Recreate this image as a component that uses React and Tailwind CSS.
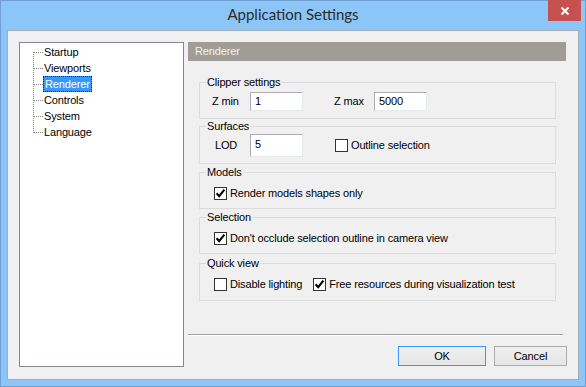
import React from "react";

const treeItems = ["Startup", "Viewports", "Renderer", "Controls", "System", "Language"];

const CheckBox = ({ checked }) => (
  <span className="w-[13px] h-[13px] shrink-0 border border-[#333333] bg-white flex items-center justify-center">
    {checked && (
      <svg width="11" height="11" viewBox="0 0 11 11">
        <path d="M1.6 5.2 L4.2 8.2 L9.4 1.6" stroke="#000" strokeWidth="2.1" fill="none" />
      </svg>
    )}
  </span>
);

const Field = ({ value, tall }) => (
  <div
    className={
      tall
        ? "w-[53px] h-[23px] bg-white border border-[#e3e9ef] border-t-[#abadb3] border-l-[#abadb3] pl-[4px] pt-[2px] leading-[14px]"
        : "w-[53px] h-[19px] bg-white border border-[#e3e9ef] border-t-[#abadb3] border-l-[#abadb3] pl-[4px] pt-[1px] leading-[14px]"
    }
  >
    {value}
  </div>
);

const Group = ({ title, className, children }) => (
  <fieldset className={`m-0 p-0 min-w-0 border border-[#dcdcdc] ${className || ""}`}>
    <legend className="ml-[6px] px-[1px] leading-[14px]">{title}</legend>
    {children}
  </fieldset>
);

const TreeLines = () => (
  <svg width="11" height="96" viewBox="0 0 11 96" className="shrink-0" shapeRendering="crispEdges">
    <line x1="1.5" y1="8" x2="1.5" y2="89" stroke="#808080" strokeDasharray="1 1" />
    {[0, 1, 2, 3, 4, 5].map((i) => (
      <line key={i} x1="2" y1={8.5 + i * 16} x2="11" y2={8.5 + i * 16} stroke="#808080" strokeDasharray="1 1" />
    ))}
  </svg>
);

export default function App() {
  return (
    <div className="w-[586px] h-[387px] flex flex-col bg-[#8cc6f8] border border-[#6f9fd3] font-['Liberation_Sans',Arial,sans-serif] text-[11px] tracking-[-0.15px] text-black">
      {/* title bar */}
      <div className="relative h-[29px] shrink-0 flex items-center justify-center">
        <span className="font-['Lato',sans-serif] text-[15px] tracking-normal text-[#2b2b2b] -mt-[2px]">Application Settings</span>
        <div className="absolute -top-[1px] right-[4px] w-[33px] h-[21px] bg-[#c75050] flex items-center justify-center">
          <svg width="8" height="8" viewBox="0 0 8 8">
            <path d="M0.5 0.5 L7.5 7.5 M7.5 0.5 L0.5 7.5" stroke="#fff" strokeWidth="2" />
          </svg>
        </div>
      </div>

      {/* client area */}
      <div className="flex-1 mx-[6px] mb-[6px] bg-[#f0f0f0] border border-[#a3acb8] flex pt-[11px] pl-[11px] gap-[4px]">
        {/* tree */}
        <div className="w-[165px] h-[325px] shrink-0 bg-white border border-[#828790] pt-[1px] pl-[12px] flex">
          <TreeLines />
          <div className="flex flex-col">
            {treeItems.map((item) => (
              <div key={item} className="h-[16px] flex items-center">
                {item === "Renderer" ? (
                  <span className="h-[16px] px-[1px] leading-[14px] bg-[#3399ff] text-white border border-dotted border-[#222]">
                    {item}
                  </span>
                ) : (
                  <span className="pl-[1px]">{item}</span>
                )}
              </div>
            ))}
          </div>
        </div>

        {/* right side */}
        <div className="w-[379px] flex flex-col">
          <div className="w-[378px] h-[19px] bg-[#a09d96] text-[#f4f4f4] pl-[7px] leading-[19px]">Renderer</div>

          <div className="mt-[14px] px-[11px] flex flex-col w-[379px]">
            <Group title="Clipper settings">
              <div className="flex items-center pt-[3px] pb-[7px] pl-[12px]">
                <span className="w-[38px]">Z min</span>
                <Field value="1" />
                <span className="w-[40px] ml-[31px]">Z max</span>
                <Field value="5000" />
              </div>
            </Group>

            <Group title="Surfaces">
              <div className="flex items-center pt-[1px] pb-[6px] pl-[15px]">
                <span className="w-[35px]">LOD</span>
                <Field value="5" tall />
                <span className="ml-[32px] flex items-center gap-[3px]">
                  <CheckBox />
                  <span>Outline selection</span>
                </span>
              </div>
            </Group>

            <Group title="Models" className="mt-[1px]">
              <div className="flex items-center gap-[3px] pt-[7px] pb-[8px] pl-[14px] leading-[14px]">
                <CheckBox checked />
                <span>Render models shapes only</span>
              </div>
            </Group>

            <Group title="Selection" className="mt-[1px]">
              <div className="flex items-center gap-[3px] pt-[7px] pb-[8px] pl-[14px] leading-[14px]">
                <CheckBox checked />
                <span>Don&apos;t occlude selection outline in camera view</span>
              </div>
            </Group>

            <Group title="Quick view" className="mt-[2px]">
              <div className="flex items-center pt-[7px] pb-[9px] pl-[14px] leading-[14px]">
                <CheckBox />
                <span className="ml-[3px]">Disable lighting</span>
                <span className="ml-[11px]">
                  <CheckBox checked />
                </span>
                <span className="ml-[3px]">Free resources during visualization test</span>
              </div>
            </Group>
          </div>

          <div className="mt-[33px] w-[375px] border-t border-t-[#a0a0a0] border-b border-b-white" />

          <div className="mt-[10px] flex justify-end gap-[8px]">
            <button className="w-[88px] h-[20px] border border-[#3399ff] bg-linear-to-b from-[#f0f0f0] to-[#e5e5e5] leading-[18px]">
              OK
            </button>
            <button className="w-[73px] h-[20px] border border-[#acacac] bg-linear-to-b from-[#f0f0f0] to-[#e5e5e5] leading-[18px]">
              Cancel
            </button>
          </div>
        </div>
      </div>
    </div>
  );
}
